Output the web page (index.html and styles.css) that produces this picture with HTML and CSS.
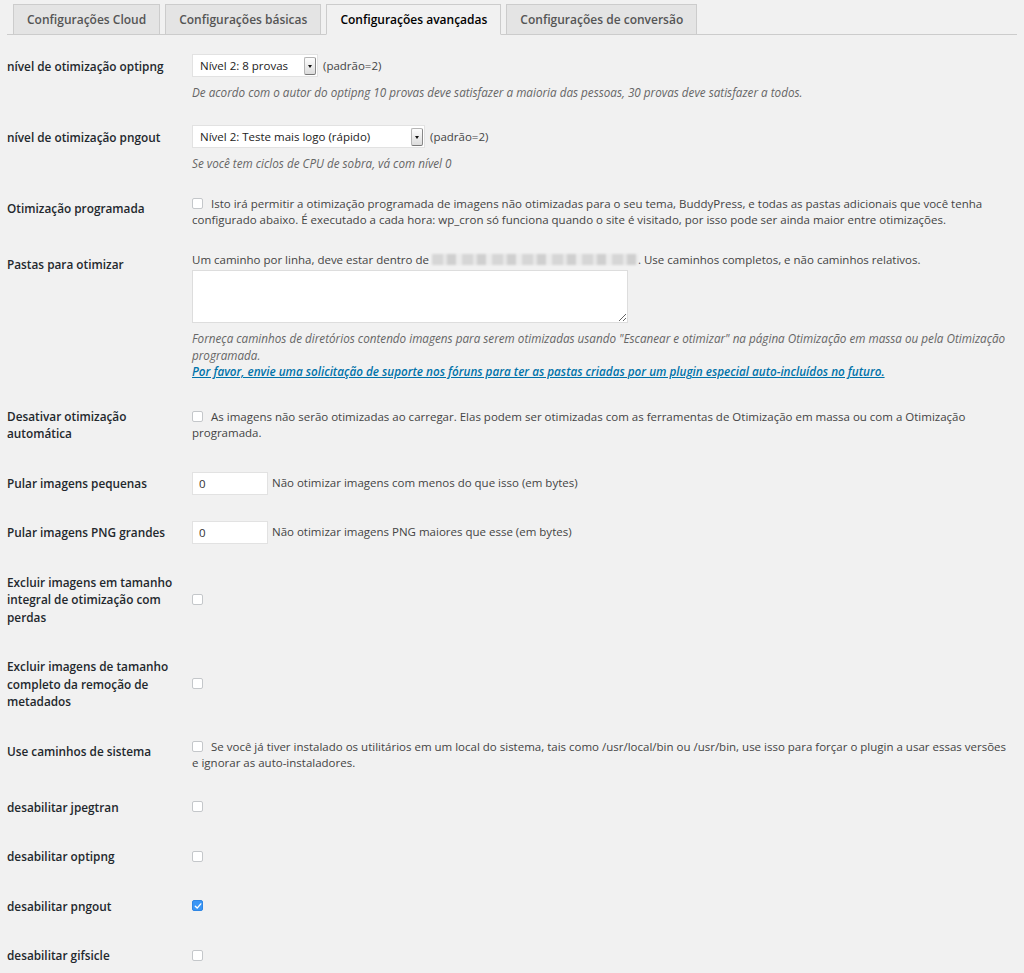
FILE: index.html
```html
<!DOCTYPE html>
<html lang="pt-BR">

<head>
    <meta charset="UTF-8">
    <title>EWWW Image Optimizer</title>
    <link rel="stylesheet" href="styles.css">
</head>

<body>
    <div class="wrap">
        <!--* tabs -->
        <h2 class="nav-tab-wrapper">
            <a class="nav-tab">Configurações Cloud</a>
            <a class="nav-tab">Configurações básicas</a>
            <a class="nav-tab nav-tab-active">Configurações avançadas</a>
            <a class="nav-tab">Configurações de conversão</a>
        </h2>

        <table class="form-table">
            <tr>
                <th>nível de otimização optipng</th>
                <td>
                    <div class="field-line">
                        <span class="select select-small"><span>Nível 2: 8 provas</span><i class="arrow"></i></span>
                        <span>(padrão=2)</span>
                    </div>
                    <p class="description">De acordo com o autor do optipng 10 provas deve satisfazer a maioria das pessoas, 30 provas deve satisfazer a todos.</p>
                </td>
            </tr>
            <tr>
                <th>nível de otimização pngout</th>
                <td>
                    <div class="field-line">
                        <span class="select select-wide"><span>Nível 2: Teste mais logo (rápido)</span><i class="arrow"></i></span>
                        <span>(padrão=2)</span>
                    </div>
                    <p class="description">Se você tem ciclos de CPU de sobra, vá com nível 0</p>
                </td>
            </tr>
            <tr>
                <th>Otimização programada</th>
                <td><span class="cb"></span>Isto irá permitir a otimização programada de imagens não otimizadas para o seu tema, BuddyPress, e todas as pastas adicionais que você tenha configurado abaixo. É executado a cada hora: wp_cron só funciona quando o site é visitado, por isso pode ser ainda maior entre otimizações.</td>
            </tr>
            <tr>
                <th>Pastas para otimizar</th>
                <td>
                    <div>Um caminho por linha, deve estar dentro de <span class="blurred"></span>. Use caminhos completos, e não caminhos relativos.</div>
                    <textarea class="folders"></textarea>
                    <p class="description desc-block">Forneça caminhos de diretórios contendo imagens para serem otimizadas usando "Escanear e otimizar" na página Otimização em massa ou pela Otimização programada.<br>
                        <a class="support-link" href="#">Por favor, envie uma solicitação de suporte nos fóruns para ter as pastas criadas por um plugin especial auto-incluídos no futuro.</a></p>
                </td>
            </tr>
            <tr>
                <th>Desativar otimização automática</th>
                <td><span class="cb"></span>As imagens não serão otimizadas ao carregar. Elas podem ser otimizadas com as ferramentas de Otimização em massa ou com a Otimização programada.</td>
            </tr>
            <tr>
                <th>Pular imagens pequenas</th>
                <td><input class="small-text" type="text" value="0"> Não otimizar imagens com menos do que isso (em bytes)</td>
            </tr>
            <tr>
                <th>Pular imagens PNG grandes</th>
                <td><input class="small-text" type="text" value="0"> Não otimizar imagens PNG maiores que esse (em bytes)</td>
            </tr>
            <tr>
                <th>Excluir imagens em tamanho integral de otimização com perdas</th>
                <td><span class="cb"></span></td>
            </tr>
            <tr>
                <th>Excluir imagens de tamanho completo da remoção de metadados</th>
                <td><span class="cb"></span></td>
            </tr>
            <tr>
                <th>Use caminhos de sistema</th>
                <td><span class="cb"></span>Se você já tiver instalado os utilitários em um local do sistema, tais como /usr/local/bin ou /usr/bin, use isso para forçar o plugin a usar essas versões e ignorar as auto-instaladores.</td>
            </tr>
            <tr>
                <th>desabilitar jpegtran</th>
                <td><span class="cb"></span></td>
            </tr>
            <tr>
                <th>desabilitar optipng</th>
                <td><span class="cb"></span></td>
            </tr>
            <tr>
                <th>desabilitar pngout</th>
                <td><span class="cb cb-checked"><svg viewBox="0 0 12 12" width="12" height="12"><path d="M3.3 6.2 L5.2 8.1 L8.8 3.9" fill="none" stroke="#fff" stroke-width="1.4" stroke-linecap="round" stroke-linejoin="round"/></svg></span></td>
            </tr>
            <tr>
                <th>desabilitar gifsicle</th>
                <td><span class="cb"></span></td>
            </tr>
        </table>
    </div>
</body>

</html>
```

FILE: styles.css
```css
body {
    margin: 0;
    background-color: #f1f1f1;
    font-family: "Open Sans", "Liberation Sans", sans-serif;
    font-size: 11.5px;
    color: #444;
}

.wrap {
    padding: 0 7px;
}

.nav-tab-wrapper {
    display: flex;
    gap: 5px;
    margin: 0;
    padding: 4px 0 0 6px;
    border-bottom: 1px solid #ccc;
}

.nav-tab {
    height: 29px;
    line-height: 29px;
    padding: 0 13px;
    margin-bottom: -1px;
    border: 1px solid #ccc;
    background-color: #e4e4e4;
    color: #555;
    font-size: 12px;
    font-weight: 600;
    text-decoration: none;
}

.nav-tab-active {
    background-color: #f1f1f1;
    border-bottom-color: #f1f1f1;
    color: #000;
}

.form-table {
    width: 100%;
    margin-top: 7px;
    border-collapse: collapse;
}

.form-table th {
    width: 175px;
    padding: 16px 10px 16px 0;
    vertical-align: top;
    text-align: left;
    font-size: 11.8px;
    font-weight: 600;
    line-height: 17.5px;
    color: #23282d;
}

.form-table td {
    padding: 12px 4px 12px 0;
    vertical-align: middle;
    line-height: 16px;
}

.field-line {
    display: flex;
    align-items: center;
    gap: 5px;
}

.select {
    display: inline-flex;
    align-items: center;
    justify-content: space-between;
    box-sizing: border-box;
    height: 23px;
    padding: 0 1px 0 7px;
    background-color: #fff;
    border: 1px solid #e2e2e2;
    color: #222;
}

.select-small {
    width: 126px;
}

.select-wide {
    width: 233px;
}

.arrow {
    position: relative;
    box-sizing: border-box;
    width: 12px;
    height: 18px;
    border: 1px solid #b5b5b5;
    border-right-color: #888;
    border-bottom-color: #777;
    border-radius: 2px;
    background: linear-gradient(#fdfdfd, #dcdcdc);
}

.arrow::after {
    content: "";
    position: absolute;
    left: 3px;
    top: 7px;
    border-left: 2px solid transparent;
    border-right: 2px solid transparent;
    border-top: 3px solid #111;
}

.description {
    margin: 6px 0 0;
    font-style: italic;
    font-size: 11.7px;
    line-height: 18px;
    color: #666;
}

.desc-block {
    margin-top: 7px;
    line-height: 16.5px;
}

.support-link {
    color: #0073aa;
    font-weight: 600;
}

.cb {
    display: inline-block;
    box-sizing: border-box;
    width: 11px;
    height: 11px;
    margin-right: 8px;
    vertical-align: -1px;
    background-color: #fff;
    border: 1px solid #c4c7ca;
    border-radius: 2px;
}

.cb-checked {
    position: relative;
    background-color: #3a96f5;
    border-color: #2f86e4;
}

.cb-checked svg {
    position: absolute;
    left: -1px;
    top: -1px;
}

.blurred {
    display: inline-block;
    width: 206px;
    height: 11px;
    vertical-align: -1px;
    background: repeating-linear-gradient(90deg, #d6d6d6 0 11px, #e6e6e6 11px 15px, #cfcfcf 15px 24px, #ebebeb 24px 30px);
    filter: blur(1.2px);
}

.folders {
    display: block;
    box-sizing: border-box;
    width: 436px;
    height: 53px;
    margin-top: 2px;
    background-color: #fff;
    border: 1px solid #ddd;
    border-radius: 0;
}

.small-text {
    box-sizing: border-box;
    width: 76px;
    height: 23px;
    padding: 0 6px;
    margin-right: 1px;
    border: 1px solid #e2e2e2;
    font-family: inherit;
    font-size: 11.5px;
    color: #333;
    vertical-align: middle;
}
```
